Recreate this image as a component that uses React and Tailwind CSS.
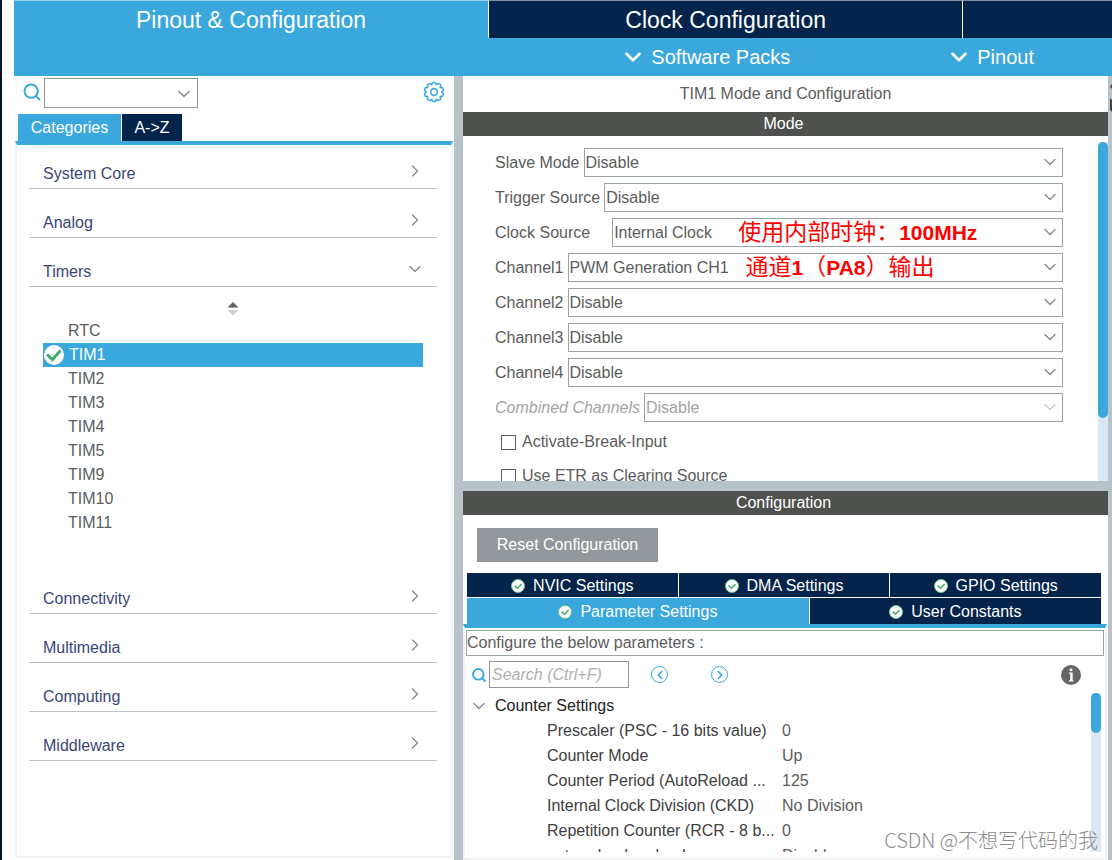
import React, { useState } from 'react';
import { ChevronDown, ChevronRight, ChevronLeft, Search } from 'lucide-react';

const groupsTop = ['System Core', 'Analog'];
const groupsBottom = ['Connectivity', 'Multimedia', 'Computing', 'Middleware'];
const timers = ['RTC', 'TIM1', 'TIM2', 'TIM3', 'TIM4', 'TIM5', 'TIM9', 'TIM10', 'TIM11'];

const modes = [
  { id: 'slave', label: 'Slave Mode', value: 'Disable' },
  { id: 'trigger', label: 'Trigger Source', value: 'Disable' },
  { id: 'clock', label: 'Clock Source', value: 'Internal Clock', wide: true },
  { id: 'ch1', label: 'Channel1', value: 'PWM Generation CH1' },
  { id: 'ch2', label: 'Channel2', value: 'Disable' },
  { id: 'ch3', label: 'Channel3', value: 'Disable' },
  { id: 'ch4', label: 'Channel4', value: 'Disable' },
  { id: 'combined', label: 'Combined Channels', value: 'Disable', disabled: true },
];

const params = [
  ['Prescaler (PSC - 16 bits value)', '0'],
  ['Counter Mode', 'Up'],
  ['Counter Period (AutoReload ...', '125'],
  ['Internal Clock Division (CKD)', 'No Division'],
  ['Repetition Counter (RCR - 8 b...', '0'],
  ['auto-reload preload', 'Disable'],
];

const notes = {
  clock: (
    <span className="pointer-events-none absolute left-[126px] top-0 whitespace-nowrap text-[23px] leading-7 text-[#ff0000]">
      使用内部时钟：<b className="text-[21px]">100MHz</b>
    </span>
  ),
  ch1: (
    <span className="pointer-events-none absolute left-[178px] top-0 whitespace-nowrap text-[23px] leading-7 text-[#ff0000]">
      通道<b className="text-[21px]">1</b>（<b className="text-[21px]">PA8</b>）输出
    </span>
  ),
};

const gearTeeth = [0, 36, 72, 108, 144, 180, 216, 252, 288, 324];

const Gear = () => (
  <svg viewBox="0 0 22 22" className="h-[22px] w-[22px]" fill="none" stroke="#3aa8dc">
    {gearTeeth.map((angle) => (
      <path
        key={angle}
        d="M8.7 4 9.1 2.4Q9.3 1.4 10.2 1.4H11.8Q12.7 1.4 12.9 2.4L13.3 4"
        strokeWidth="1.5"
        transform={`rotate(${angle} 11 11)`}
      />
    ))}
    <circle cx="11" cy="11" r="3.4" strokeWidth="1.6" />
  </svg>
);

const CheckBadge = () => (
  <svg viewBox="0 0 14 14" className="h-3.5 w-3.5 shrink-0">
    <circle cx="7" cy="7" r="6.5" fill="#fff" stroke="#6fc492" strokeWidth="1" />
    <path d="M3.6 6.6 6.5 9.3 10.6 5" fill="none" stroke="#3fae6c" strokeWidth="1.5" />
  </svg>
);

const GroupRow = ({ name, open }) => (
  <button className="flex h-[30px] w-full shrink-0 items-start justify-between border-b border-[#b9c5cb] pl-3.5 pr-3 text-left text-[#3a4576]">
    <span className="pt-[3px] leading-6">{name}</span>
    {open ? (
      <ChevronDown className="mt-0.5 h-5 w-5 text-[#8a8a8a]" strokeWidth={1.6} />
    ) : (
      <ChevronRight className="mt-0.5 h-5 w-5 text-[#8a8a8a]" strokeWidth={1.6} />
    )}
  </button>
);

const ModeRow = ({ id, label, value, wide, disabled }) => (
  <div className="flex h-[29px] items-center gap-1">
    <label
      htmlFor={id}
      className={`shrink-0 ${wide ? 'pr-[18px]' : ''} ${disabled ? 'italic text-[#a3a3a3]' : ''}`}
    >
      {label}
    </label>
    <div className="relative h-full flex-1">
      <select
        id={id}
        disabled={disabled}
        className={`h-full w-full appearance-none border border-[#9ba3a9] bg-white pl-px ${disabled ? 'text-[#a3a3a3] opacity-100' : ''}`}
      >
        <option>{value}</option>
      </select>
      <ChevronDown
        className={`pointer-events-none absolute right-[3px] top-1 h-5 w-5 ${disabled ? 'text-[#c9c9c9]' : 'text-[#8a8a8a]'}`}
        strokeWidth={1.6}
      />
      {notes[id]}
    </div>
  </div>
);

const Tab = ({ children, active }) => (
  <button
    className={`flex items-center justify-center gap-2 pt-0.5 leading-5 text-white ${active ? 'bg-[#3aa8dc]' : 'bg-[#04244b]'}`}
  >
    <CheckBadge />
    {children}
  </button>
);

const Sidebar = () => {
  const [selected, setSelected] = useState('TIM1');

  return (
    <aside className="flex w-[440px] shrink-0 flex-col px-px pb-0.5">
      <div className="flex h-[38px] items-center pb-1 pl-[7px] pr-2">
        <label htmlFor="ip-search">
          <Search className="mb-0.5 h-5 w-5 text-[#3aa8dc]" strokeWidth={2.4} />
        </label>
        <div className="relative ml-0.5 h-[30px] w-[154px]">
          <select
            id="ip-search"
            className="h-full w-full appearance-none border border-[#8f969c] bg-white"
          ></select>
          <ChevronDown className="pointer-events-none absolute right-1 top-1.5 h-5 w-5 text-[#8a8a8a]" strokeWidth={1.8} />
        </div>
        <button className="mb-0.5 ml-auto" aria-label="Settings">
          <Gear />
        </button>
      </div>

      <div className="flex h-[27px] gap-px pl-[3px] leading-6">
        <button className="w-[103px] bg-[#3aa8dc] text-white">Categories</button>
        <button className="w-[60px] bg-[#04244b] text-white">A-&gt;Z</button>
      </div>

      <div className="flex min-h-0 flex-1 flex-col gap-[19px] overflow-hidden border-x-2 border-b-2 border-t-4 border-[#f1f2f3] border-t-[#3aa8dc] pl-3 pr-3.5 pt-3.5">
        {groupsTop.map((name) => (
          <GroupRow key={name} name={name} />
        ))}
        <GroupRow name="Timers" open />
        <div className="h-[259px] shrink-0 px-3.5">
          <svg viewBox="0 0 12 14" className="mx-auto -mt-1 mb-[3px] h-3.5 w-3">
            <path d="M6 0 11.5 5.5H.5Z" fill="#5f5f5f" />
            <path d="M6 13.5 11.5 8H.5Z" fill="#cfcfcf" />
          </svg>
          <ul>
            {timers.map((name) => (
              <li key={name}>
                <button
                  onClick={() => setSelected(name)}
                  className={`flex h-6 w-full items-center gap-1 ${name === selected ? 'bg-[#3aa8dc] text-white' : 'pl-[25px]'}`}
                >
                  {name === selected && (
                    <svg viewBox="0 0 22 22" className="h-[22px] w-[22px]">
                      <circle cx="11" cy="11" r="10" fill="#fff" />
                      <path d="M4 10.5 9.5 15.5 17.5 6.5" fill="none" stroke="#3fae6c" strokeWidth="3" />
                    </svg>
                  )}
                  {name}
                </button>
              </li>
            ))}
          </ul>
        </div>
        {groupsBottom.map((name) => (
          <GroupRow key={name} name={name} />
        ))}
      </div>
    </aside>
  );
};

const ModePanel = () => (
  <section className="flex h-[405px] shrink-0 flex-col">
    <h2 className="h-9 text-center leading-9">TIM1 Mode and Configuration</h2>
    <h3 className="h-6 bg-[#4f514f] pr-1 text-center leading-6 text-white">Mode</h3>
    <div className="flex min-h-0 flex-1 overflow-hidden">
      <form className="flex-1 pl-8 pr-[35px] pt-3">
        <div className="flex flex-col gap-1.5">
          {modes.map((mode) => (
            <ModeRow key={mode.id} {...mode} />
          ))}
        </div>
        <div className="mt-[3px] pl-1.5">
          {['Activate-Break-Input', 'Use ETR as Clearing Source'].map((text) => (
            <label key={text} className="flex h-[34px] items-center gap-1.5">
              <input type="checkbox" className="h-[15px] w-[15px] appearance-none border border-[#5c5c5c] bg-white" />
              {text}
            </label>
          ))}
        </div>
      </form>
      <div className="mt-1.5 w-2.5 bg-[#d9e8f5]">
        <div className="h-[276px] rounded-full bg-[#3aa8dc]"></div>
      </div>
    </div>
  </section>
);

const ConfigPanel = () => (
  <section className="flex min-h-0 flex-1 flex-col">
    <h3 className="h-6 shrink-0 bg-[#4f514f] pr-1 text-center leading-6 text-white">Configuration</h3>
    <div className="px-3.5 pb-[11px] pt-[13px]">
      <button className="h-[34px] w-[181px] bg-[#91979b] text-white">Reset Configuration</button>
    </div>
    <div className="flex flex-col gap-px pl-1 pr-[7px]">
      <div className="grid h-6 grid-cols-3 gap-px">
        <Tab>NVIC Settings</Tab>
        <Tab>DMA Settings</Tab>
        <Tab>GPIO Settings</Tab>
      </div>
      <div className="grid h-[26px] grid-cols-[27fr_23fr] gap-px">
        <Tab active>Parameter Settings</Tab>
        <Tab>User Constants</Tab>
      </div>
    </div>
    <div className="mr-px flex min-h-0 flex-1 flex-col border-x-2 border-b-2 border-t-4 border-[#f1f2f3] border-t-[#3aa8dc] pt-0.5">
      <p className="mx-px h-[26px] shrink-0 border border-[#9ba3a9] leading-6">Configure the below parameters :</p>
      <div className="flex h-[37px] shrink-0 items-center pl-1.5 pr-6">
        <label htmlFor="param-search">
          <Search className="mr-0.5 h-4 w-4 text-[#3aa8dc]" strokeWidth={2.8} />
        </label>
        <input
          id="param-search"
          placeholder="Search (Ctrl+F)"
          className="h-[27px] w-[140px] border border-[#8f969c] pl-0.5 italic placeholder:text-[#b0b0b0]"
        />
        <button
          aria-label="Previous"
          className="ml-[22px] flex h-[17px] w-[17px] items-center justify-center rounded-full border border-[#3aa8dc] text-[#3aa8dc]"
        >
          <ChevronLeft className="h-3.5 w-3.5" strokeWidth={3} />
        </button>
        <button
          aria-label="Next"
          className="ml-[43px] flex h-[17px] w-[17px] items-center justify-center rounded-full border border-[#3aa8dc] text-[#3aa8dc]"
        >
          <ChevronRight className="h-3.5 w-3.5" strokeWidth={3} />
        </button>
        <button aria-label="Information" className="ml-auto">
          <svg viewBox="0 0 20 20" className="h-5 w-5">
            <circle cx="10" cy="10" r="10" fill="#666" />
            <circle cx="10" cy="4.8" r="1.5" fill="#fff" />
            <path d="M8.2 8.2H11V15.4M8 15.8H12.4" fill="none" stroke="#fff" strokeWidth="1.2" />
            <path d="M10.2 8V16" stroke="#fff" strokeWidth="2" />
          </svg>
        </button>
      </div>
      <div className="mb-1.5 flex min-h-0 flex-1 overflow-hidden pr-1">
        <div className="flex-1">
          <button className="flex h-[25px] items-center gap-1.5 pl-1 text-[#222]">
            <ChevronDown className="h-5 w-5 text-[#8a8a8a]" strokeWidth={1.6} />
            Counter Settings
          </button>
          <table className="w-full table-fixed">
            <tbody>
              {params.map(([name, value]) => (
                <tr key={name} className="h-[25px]">
                  <th scope="row" className="w-[317px] whitespace-nowrap pl-[82px] text-left font-normal text-[#404040]">
                    {name}
                  </th>
                  <td>{value}</td>
                </tr>
              ))}
            </tbody>
          </table>
        </div>
        <div className="w-2.5 bg-[#d9e8f5]">
          <div className="h-10 rounded-full bg-[#3aa8dc]"></div>
        </div>
      </div>
    </div>
  </section>
);

export default function App() {
  return (
    <div className="relative flex h-screen flex-col overflow-hidden border-l-2 border-[#04152c] bg-white pl-3 font-['Liberation_Sans','Noto_Sans_CJK_SC',sans-serif] text-base leading-6 text-[#5c5c5c]">
      <header className="shrink-0 bg-[#3aa8dc]">
        <nav className="grid h-[38px] grid-cols-[19fr_19fr_6fr] text-[23px] leading-9 text-white">
          <button className="border-t border-white/50">Pinout &amp; Configuration</button>
          <button className="border-l border-t border-l-white border-t-white/50 bg-[#04244b]">Clock Configuration</button>
          <button aria-label="Project Manager" className="border-l border-t border-l-white border-t-white/50 bg-[#04244b]"></button>
        </nav>
        <div className="flex h-[38px] items-center justify-end gap-[156px] pr-[78px] text-xl text-white">
          <button className="flex items-center gap-[5px]">
            <ChevronDown className="h-[26px] w-[26px]" strokeWidth={2.4} />
            Software Packs
          </button>
          <button className="flex items-center gap-[5px]">
            <ChevronDown className="h-[26px] w-[26px]" strokeWidth={2.4} />
            Pinout
          </button>
        </div>
      </header>

      <div className="flex min-h-0 flex-1">
        <Sidebar />
        <div className="w-[9px] shrink-0 bg-[#b7c3c9]"></div>
        <main className="flex min-w-0 flex-1 flex-col">
          <ModePanel />
          <div className="h-2.5 shrink-0 bg-[#b7c3c9]"></div>
          <ConfigPanel />
        </main>
        <div className="w-1 shrink-0 bg-[#b7c3c9] pt-2">
          <svg viewBox="0 0 4 28" className="h-7 w-1" fill="#444">
            <path d="M4 0V5L2 2.5Z" />
            <path d="M2 14 4 16V28L2 26Z" />
          </svg>
        </div>
      </div>

      <span className="pointer-events-none absolute bottom-1 right-3.5 font-['Noto_Sans_CJK_SC',sans-serif] text-xl font-light leading-8 text-[#8c8c8c]">
        CSDN @不想写代码的我
      </span>
    </div>
  );
}
